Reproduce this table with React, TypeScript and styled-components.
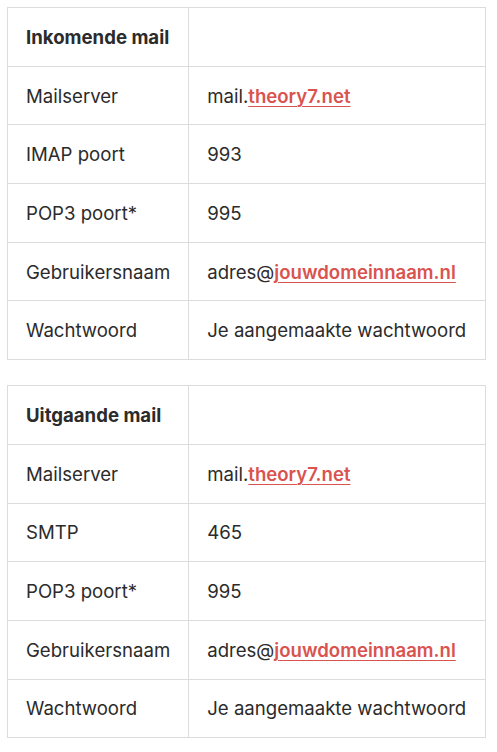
import { createGlobalStyle, styled } from 'styled-components';

const GlobalStyle = createGlobalStyle`
  body {
    margin: 0;
    background: #fff;
    font-family: Inter, 'Noto Sans', sans-serif;
    color: #2b2b2b;
  }
`;

const Page = styled.div`
  padding: 7px 11px 7px 7px;
  display: flex;
  flex-direction: column;
  gap: 25px;
`;

const Table = styled.table`
  width: 479px;
  border-collapse: collapse;
  font-size: 18.6px;
  line-height: 26px;
`;

const Cell = styled.td<{ $head?: boolean }>`
  border: 1px solid #dcdcdc;
  height: 58.7px;
  box-sizing: border-box;
  padding: 0 18px;
  font-weight: ${(p) => (p.$head ? 700 : 400)};
  vertical-align: middle;
  &:first-child {
    width: 181px;
  }
`;

const Link = styled.a`
  color: #d9534f;
  font-weight: 600;
  text-decoration: underline;
  text-decoration-thickness: 1px;
  text-underline-offset: 3px;
`;

type Row = [string, React.ReactNode];

const rowsIn: Row[] = [
  ['Mailserver', <>mail.<Link href="#">theory7.net</Link></>],
  ['IMAP poort', '993'],
  ['POP3 poort*', '995'],
  ['Gebruikersnaam', <>adres@<Link href="#">jouwdomeinnaam.nl</Link></>],
  ['Wachtwoord', 'Je aangemaakte wachtwoord'],
];

const rowsOut: Row[] = [
  ['Mailserver', <>mail.<Link href="#">theory7.net</Link></>],
  ['SMTP', '465'],
  ['POP3 poort*', '995'],
  ['Gebruikersnaam', <>adres@<Link href="#">jouwdomeinnaam.nl</Link></>],
  ['Wachtwoord', 'Je aangemaakte wachtwoord'],
];

const MailTable = ({ title, rows }: { title: string; rows: Row[] }) => (
  <Table>
    <tbody>
      <tr>
        <Cell $head>{title}</Cell>
        <Cell />
      </tr>
      {rows.map(([k, v]) => (
        <tr key={k}>
          <Cell>{k}</Cell>
          <Cell>{v}</Cell>
        </tr>
      ))}
    </tbody>
  </Table>
);

const App = () => (
  <>
    <GlobalStyle />
    <Page>
      <MailTable title="Inkomende mail" rows={rowsIn} />
      <MailTable title="Uitgaande mail" rows={rowsOut} />
    </Page>
  </>
);

export default App;
